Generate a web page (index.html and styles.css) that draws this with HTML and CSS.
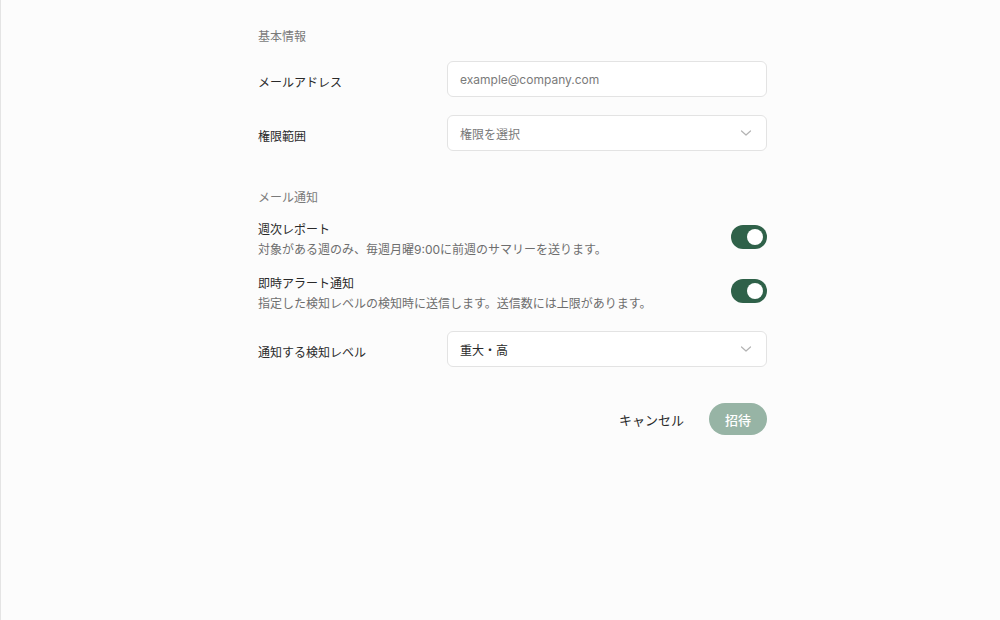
FILE: index.html
```html
<!DOCTYPE html>
<html lang="ja">
<head>
<meta charset="utf-8">
<title>招待</title>
<link rel="stylesheet" href="styles.css">
</head>
<body>
<div class="page">
  <form class="form">
    <div class="section-title">基本情報</div>
    <div class="field-row first">
      <label class="field-label">メールアドレス</label>
      <div class="control"><span class="placeholder">example@company.com</span></div>
    </div>
    <div class="field-row">
      <label class="field-label">権限範囲</label>
      <div class="control select"><span class="placeholder">権限を選択</span>
        <svg class="chev" width="12" height="8" viewBox="0 0 12 8"><path d="M1.5 2 L6 6 L10.5 2" fill="none" stroke="#b3b3b3" stroke-width="1.2" stroke-linecap="round" stroke-linejoin="round"/></svg>
      </div>
    </div>

    <div class="section-title second">メール通知</div>
    <div class="toggle-row first-toggle">
      <div class="toggle-text">
        <div class="toggle-title">週次レポート</div>
        <div class="toggle-desc">対象がある週のみ、毎週月曜9:00に前週のサマリーを送ります。</div>
      </div>
      <span class="toggle"><span class="knob"></span></span>
    </div>
    <div class="toggle-row">
      <div class="toggle-text">
        <div class="toggle-title">即時アラート通知</div>
        <div class="toggle-desc">指定した検知レベルの検知時に送信します。送信数には上限があります。</div>
      </div>
      <span class="toggle"><span class="knob"></span></span>
    </div>
    <div class="field-row level">
      <label class="field-label">通知する検知レベル</label>
      <div class="control select"><span class="value">重大・高</span>
        <svg class="chev" width="12" height="8" viewBox="0 0 12 8"><path d="M1.5 2 L6 6 L10.5 2" fill="none" stroke="#b3b3b3" stroke-width="1.2" stroke-linecap="round" stroke-linejoin="round"/></svg>
      </div>
    </div>

    <div class="actions">
      <button type="button" class="btn-cancel">キャンセル</button>
      <button type="button" class="btn-invite">招待</button>
    </div>
  </form>
</div>
</body>
</html>
```

FILE: styles.css
```css
html, body {
  margin: 0;
  padding: 0;
  height: 100%;
}
body {
  background: #fcfcfc;
  font-family: Inter, "Noto Sans CJK JP", sans-serif;
  color: #222;
}
.page {
  min-height: 620px;
  box-sizing: border-box;
  border-left: 1px solid #e4e4e4;
  padding: 27px 0 0 257px;
}
.form {
  width: 509px;
  display: flex;
  flex-direction: column;
}
.section-title {
  font-size: 12px;
  line-height: 18px;
  padding-top: 1px;
  color: #7a7a7a;
}
.section-title.second {
  margin-top: 37px;
}
.field-row {
  display: flex;
  align-items: center;
  margin-top: 18px;
}
.field-row.first {
  margin-top: 15px;
}
.field-row.level {
  margin-top: 17px;
}
.field-label {
  width: 189px;
  flex: none;
  font-size: 12px;
  line-height: 20px;
  padding-top: 8px;
  color: #2a2a2a;
}
.control {
  width: 320px;
  height: 36px;
  box-sizing: border-box;
  border: 1px solid #e3e3e3;
  border-radius: 6px;
  background: #fff;
  display: flex;
  align-items: center;
  padding: 0 14px 0 12px;
  font-size: 12px;
}
.select {
  justify-content: space-between;
}
.placeholder {
  color: #7a7a7a;
}
.value {
  color: #2a2a2a;
}
.chev {
  display: block;
}
.toggle-row {
  display: flex;
  justify-content: space-between;
  align-items: flex-start;
  margin-top: 13px;
}
.toggle-row.first-toggle {
  margin-top: 12px;
}
.toggle-text {
  padding-top: 1px;
}
.toggle-title {
  font-size: 12px;
  line-height: 20px;
  color: #2a2a2a;
}
.toggle-desc {
  font-size: 12px;
  line-height: 20px;
  color: #6e6e6e;
}
.toggle {
  width: 36px;
  height: 24px;
  border-radius: 12px;
  background: #2f6149;
  display: flex;
  align-items: center;
  justify-content: flex-end;
  padding: 0 4px;
  box-sizing: border-box;
  margin-top: 6px;
}
.knob {
  width: 16px;
  height: 16px;
  border-radius: 50%;
  background: #fff;
}
.actions {
  display: flex;
  justify-content: flex-end;
  align-items: center;
  gap: 13px;
  margin-top: 36px;
}
.btn-cancel {
  border: none;
  background: transparent;
  font-family: inherit;
  font-size: 13px;
  color: #2a2a2a;
  padding: 0 12px;
  height: 32px;
  cursor: pointer;
}
.btn-invite {
  border: none;
  width: 58px;
  height: 32px;
  border-radius: 16px;
  background: #97b4a5;
  color: #fff;
  font-family: inherit;
  font-size: 13px;
  font-weight: 500;
  padding: 0;
}
```
